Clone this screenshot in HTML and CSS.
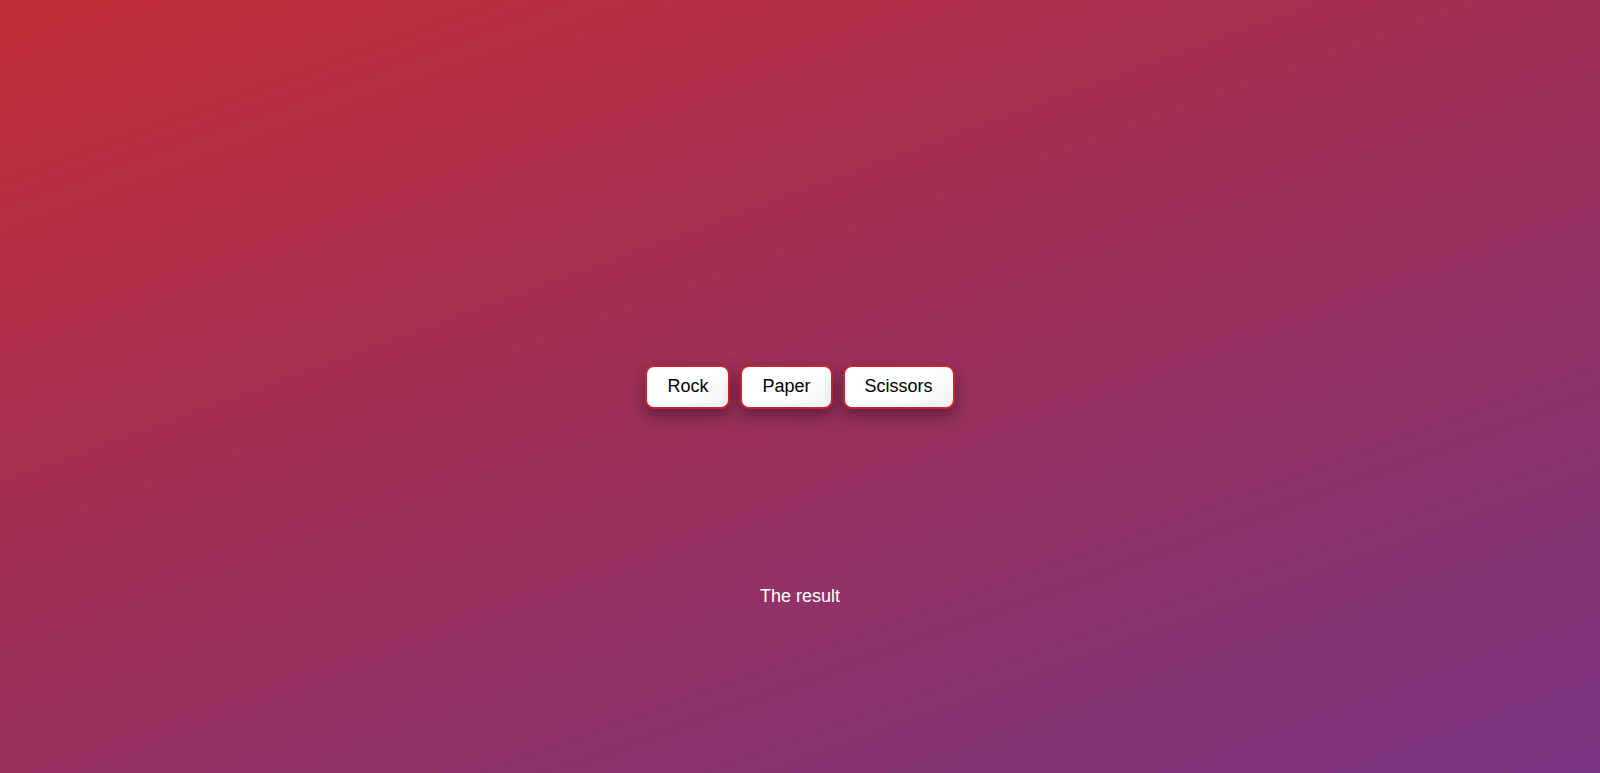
FILE: index.html
```html
<!DOCTYPE html>
<html lang="en">
<head>
<meta charset="utf-8">
<title>Rock Paper Scissors</title>
<link rel="stylesheet" href="styles.css">
</head>
<body>
<div class="page">
  <div class="spacer"></div>
  <div class="choices">
    <button class="choice">Rock</button>
    <button class="choice">Paper</button>
    <button class="choice">Scissors</button>
  </div>
  <div class="result-area">
    <p class="result">The result</p>
  </div>
</div>
</body>
</html>
```
FILE: styles.css
```css
html, body {
  margin: 0;
  padding: 0;
  height: 100%;
}
body {
  font-family: "Liberation Sans", Arial, sans-serif;
  background: linear-gradient(160deg, #c22d37 0%, #a72f50 35%, #8e336a 70%, #7a3583 100%);
  background-attachment: fixed;
  overflow: hidden;
}
.page {
  height: 100vh;
  display: grid;
  grid-template-rows: 1fr auto 1fr;
  justify-items: center;
}
.choices {
  display: flex;
  gap: 10px;
}
.choice {
  font-family: "Liberation Sans", Arial, sans-serif;
  font-size: 18px;
  color: #000;
  height: 44px;
  padding: 0 20px;
  border: 2px solid #c4262f;
  border-radius: 9px;
  background: linear-gradient(135deg, #ffffff 60%, #f0f0f0 100%);
  box-shadow: 0 7px 16px rgba(40, 10, 30, 0.5);
  cursor: pointer;
}
.result-area {
  display: flex;
  justify-content: center;
}
.result {
  margin: 177px 0 0;
  color: #fff;
  font-size: 18px;
  line-height: 21px;
}
```
